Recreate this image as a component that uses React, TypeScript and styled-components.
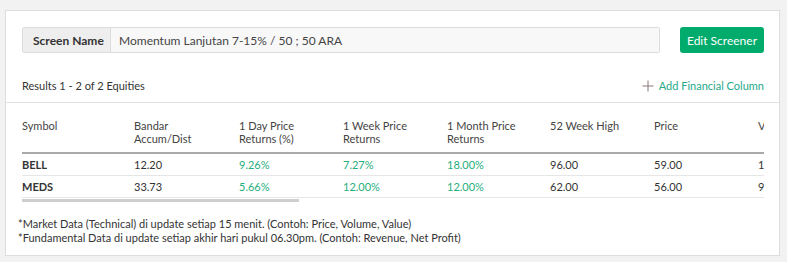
import React from "react";
import styled, { createGlobalStyle } from "styled-components";

const GlobalStyle = createGlobalStyle`
  body {
    margin: 0;
    background: #f2f2f2;
    font-family: Lato, "Open Sans", Arial, sans-serif;
    color: #333;
  }
`;

const Card = styled.div`
  margin: 10px 7px 6px 5px;
  background: #fff;
  border: 1px solid #dddddd;
  height: 246px;
  box-sizing: border-box;
`;

const TopBar = styled.div`
  display: flex;
  align-items: center;
  gap: 20px;
  padding: 16px 15px 0 16px;
`;

const NameField = styled.div`
  flex: 1;
  display: flex;
  height: 26px;
  border: 1px solid #dcdcdc;
  border-radius: 2px;
  box-sizing: border-box;
  font-size: 12px;
`;

const NameLabel = styled.div`
  display: flex;
  align-items: center;
  padding-left: 10px;
  width: 88px;
  box-sizing: border-box;
  white-space: nowrap;
  background: #eeeeee;
  border-right: 1px solid #dcdcdc;
  font-weight: 700;
  color: #333;
`;

const NameValue = styled.div`
  flex: 1;
  display: flex;
  align-items: center;
  padding: 0 8px;
  background: #f8f8f8;
  color: #444;
`;

const Button = styled.button`
  height: 26px;
  width: 84px;
  padding: 0;
  border: none;
  border-radius: 3px;
  background: #00ab6b;
  color: #fff;
  font-family: inherit;
  font-size: 12px;
`;

const ResultsBar = styled.div`
  display: flex;
  align-items: center;
  justify-content: space-between;
  padding: 16px 15px 0 16px;
  height: 50px;
  box-sizing: border-box;
  border-bottom: 1px solid #e2e2e2;
  font-size: 11px;
`;

const AddColumn = styled.span`
  display: flex;
  align-items: center;
  gap: 5px;
  color: #26a98a;
`;

const TableWrap = styled.div`
  margin: 0 15px 0 16px;
  overflow: hidden;
`;

const Table = styled.table`
  border-collapse: collapse;
  table-layout: fixed;
  width: 1988px;
  font-size: 11px;
`;

const Th = styled.th<{ $w: number }>`
  width: ${(p) => p.$w}px;
  text-align: left;
  vertical-align: top;
  font-weight: 400;
  color: #444;
  line-height: 13px;
  white-space: nowrap;
  padding: 16px 0 7px;
  border-bottom: 2px solid #a9a9a9;
`;

const Td = styled.td<{ $tone?: "up" | "sym" }>`
  height: 21px;
  padding: 0;
  border-bottom: 1px solid #e6e6e6;
  white-space: nowrap;
  color: ${(p) => (p.$tone === "up" ? "#1fae7e" : "#333")};
  font-weight: ${(p) => (p.$tone === "sym" ? 700 : 400)};
`;

const Scroll = styled.div`
  height: 3px;
  margin-top: 1px;
`;

const Thumb = styled.div`
  width: 277px;
  height: 3px;
  background: #cfcfcf;
`;

const Notes = styled.div`
  padding: 15px 12px 0;
  font-size: 11px;
  line-height: 14px;
  color: #333;
`;

const columns: { lines: string[]; w: number }[] = [
  { lines: ["Symbol"], w: 112 },
  { lines: ["Bandar", "Accum/Dist"], w: 105 },
  { lines: ["1 Day Price", "Returns (%)"], w: 104 },
  { lines: ["1 Week Price", "Returns"], w: 104 },
  { lines: ["1 Month Price", "Returns"], w: 103 },
  { lines: ["52 Week High"], w: 104 },
  { lines: ["Price"], w: 104 },
  { lines: ["Volume"], w: 104 },
  { lines: ["Value"], w: 104 },
];

const rows = [
  ["BELL", "12.20", "9.26%", "7.27%", "18.00%", "96.00", "59.00", "1,204,500", "71,065,500"],
  ["MEDS", "33.73", "5.66%", "12.00%", "12.00%", "62.00", "56.00", "9,812,300", "549,488,800"],
];

const restWidth = 1988 - columns.reduce((s, c) => s + c.w, 0);

export default function App() {
  return (
    <>
      <GlobalStyle />
      <Card>
        <TopBar>
          <NameField>
            <NameLabel>Screen Name</NameLabel>
            <NameValue>Momentum Lanjutan 7-15% / 50 ; 50 ARA</NameValue>
          </NameField>
          <Button>Edit Screener</Button>
        </TopBar>
        <ResultsBar>
          <span>Results 1 - 2 of 2 Equities</span>
          <AddColumn>
            <svg width="12" height="12" viewBox="0 0 12 12">
              <path d="M6 0.5V11.5M0.5 6H11.5" stroke="#8c7474" strokeWidth="1" />
            </svg>
            Add Financial Column
          </AddColumn>
        </ResultsBar>
        <TableWrap>
          <Table>
            <thead>
              <tr>
                {columns.map((c) => (
                  <Th key={c.lines.join(" ")} $w={c.w}>
                    {c.lines.map((l, i) => (
                      <React.Fragment key={l}>
                        {i > 0 && <br />}
                        {l}
                      </React.Fragment>
                    ))}
                  </Th>
                ))}
                <Th $w={restWidth} />
              </tr>
            </thead>
            <tbody>
              {rows.map((r) => (
                <tr key={r[0]}>
                  {r.map((v, i) => (
                    <Td key={i} $tone={i === 0 ? "sym" : i >= 2 && i <= 4 ? "up" : undefined}>
                      {v}
                    </Td>
                  ))}
                  <Td />
                </tr>
              ))}
            </tbody>
          </Table>
          <Scroll>
            <Thumb />
          </Scroll>
        </TableWrap>
        <Notes>
          *Market Data (Technical) di update setiap 15 menit. (Contoh: Price, Volume, Value)
          <br />
          *Fundamental Data di update setiap akhir hari pukul 06.30pm. (Contoh: Revenue, Net Profit)
        </Notes>
      </Card>
    </>
  );
}
